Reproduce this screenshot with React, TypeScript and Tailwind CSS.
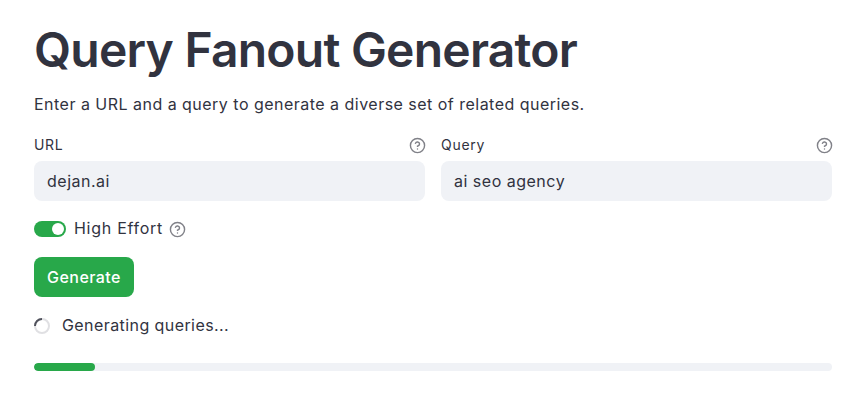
import { CircleHelp } from "lucide-react";

const font = { fontFamily: "Inter, 'Noto Sans', sans-serif" };

function Field({ label, value }: { label: string; value: string }) {
  return (
    <div className="flex-1 min-w-0">
      <div className="flex items-center justify-between h-[22px] mb-[5px]">
        <span className="text-[14px] text-[#31333f] tracking-[0.7px] -mt-[1px]">{label}</span>
        <CircleHelp size={17} strokeWidth={2} className="text-[#808188] -mr-[1px]" />
      </div>
      <div className="h-10 rounded-lg bg-[#f0f2f6] px-[13px] flex items-center text-[16px] text-[#31333f] tracking-[0.5px]">
        <span className="-mt-[1px]">{value}</span>
      </div>
    </div>
  );
}

export default function App() {
  return (
    <div style={font} className="w-[863px] h-[408px] bg-white pl-[34px] pr-[31px] pt-[20px] overflow-hidden text-[#31333f]">
      <h1 className="text-[48px] leading-[60px] font-semibold tracking-[-0.77px] text-[#31333f] whitespace-nowrap">
        Query Fanout Generator
      </h1>
      <p className="mt-[14px] text-[16px] leading-[20px] tracking-[0.48px] whitespace-nowrap">
        Enter a URL and a query to generate a diverse set of related queries.
      </p>

      <div className="flex gap-4 mt-[20px]">
        <Field label="URL" value="dejan.ai" />
        <Field label="Query" value="ai seo agency" />
      </div>

      <div className="flex items-center mt-[18px] h-5">
        <div className="w-8 h-4 rounded-full bg-[#28a84a] flex items-center justify-end pr-[2px]">
          <div className="w-3 h-3 rounded-full bg-white" />
        </div>
        <span className="ml-2 text-[16px] tracking-[0.72px] -mt-[2px]">High Effort</span>
        <CircleHelp size={17} strokeWidth={2} className="ml-[6px] text-[#808188]" />
      </div>

      <button className="mt-[18px] h-10 w-[100px] rounded-lg bg-[#28a84a] text-white text-[16px] tracking-[0.45px] font-medium flex items-center justify-center">
        Generate
      </button>

      <div className="flex items-center mt-[19px] h-5">
        <svg width="16" height="16" viewBox="0 0 16 16" fill="none">
          <circle cx="8" cy="8" r="7" stroke="#e0e0e3" strokeWidth="2" />
          <path d="M1 8A7 7 0 0 1 8 1" stroke="#50525c" strokeWidth="2" />
        </svg>
        <span className="ml-3 text-[16px] tracking-[0.42px] -mt-[2px]">Generating queries...</span>
      </div>

      <div className="mt-[27px] h-2 rounded-full bg-[#f0f2f6] overflow-hidden">
        <div className="h-2 w-[61px] rounded-full bg-[#28a84a]" />
      </div>
    </div>
  );
}
